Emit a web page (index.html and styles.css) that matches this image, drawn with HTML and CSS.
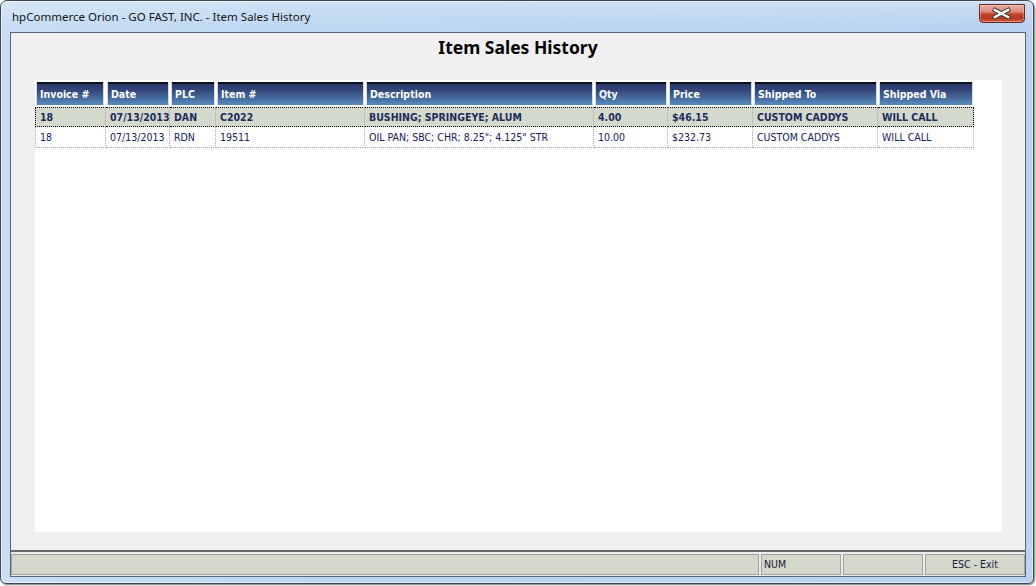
FILE: index.html
```html
<!DOCTYPE html>
<html>
<head>
<meta charset="utf-8">
<title>Item Sales History</title>
<link rel="stylesheet" href="styles.css">
</head>
<body>
<div class="window">
  <div class="titlebar">
    <span class="title">hpCommerce Orion - GO FAST, INC. - Item Sales History</span>
    <div class="close">
      <svg width="46" height="19" viewBox="0 0 46 19">
        <path d="M16 6 L29 13 M29 6 L16 13" stroke="#3b3b3b" stroke-width="4.4" stroke-linecap="square" fill="none"/>
        <path d="M16 6 L29 13 M29 6 L16 13" stroke="#ffffff" stroke-width="2.5" stroke-linecap="square" fill="none"/>
      </svg>
    </div>
  </div>
  <div class="client">
    <h1 class="heading">Item Sales History</h1>
    <div class="gridpanel">
      <table class="grid">
        <colgroup>
          <col class="w-inv"><col class="w-date"><col class="w-plc"><col class="w-item"><col class="w-desc"><col class="w-qty"><col class="w-price"><col class="w-to"><col class="w-via">
        </colgroup>
        <thead>
          <tr>
            <th><div class="hcell">Invoice #</div></th>
            <th><div class="hcell">Date</div></th>
            <th><div class="hcell">PLC</div></th>
            <th><div class="hcell">Item #</div></th>
            <th><div class="hcell">Description</div></th>
            <th><div class="hcell">Qty</div></th>
            <th><div class="hcell">Price</div></th>
            <th><div class="hcell">Shipped To</div></th>
            <th><div class="hcell">Shipped Via</div></th>
          </tr>
        </thead>
        <tbody>
          <tr class="selected">
            <td>18</td><td>07/13/2013</td><td>DAN</td><td>C2022</td><td>BUSHING; SPRINGEYE; ALUM</td><td>4.00</td><td>$46.15</td><td>CUSTOM CADDYS</td><td>WILL CALL</td>
          </tr>
          <tr>
            <td>18</td><td>07/13/2013</td><td>RDN</td><td>19511</td><td>OIL PAN; SBC; CHR; 8.25"; 4.125" STR</td><td>10.00</td><td>$232.73</td><td>CUSTOM CADDYS</td><td>WILL CALL</td>
          </tr>
        </tbody>
      </table>
    </div>
    <div class="statusbar">
      <div class="panel panel-main"></div>
      <div class="panel panel-num">NUM</div>
      <div class="panel panel-empty"></div>
      <div class="panel panel-esc">ESC - Exit</div>
    </div>
  </div>
</div>
</body>
</html>
```

FILE: styles.css
```css
html, body {
  margin: 0;
  padding: 0;
  background: #ffffff;
}

body {
  width: 1036px;
  height: 586px;
  overflow: hidden;
}

.window {
  box-sizing: border-box;
  width: 1034px;
  height: 584px;
  border: 1px solid #3f4650;
  border-radius: 7px 7px 6px 6px;
  background: linear-gradient(to right, #c9def4 0%, #bed7f1 30%, #b9d3f0 100%);
  box-shadow: inset 0 0 0 1px rgba(255,255,255,0.55), 1px 1px 2px rgba(0,0,0,0.55);
  padding: 0 7px 6px 9px;
  display: flex;
  flex-direction: column;
}

.titlebar {
  height: 31px;
  display: flex;
  align-items: flex-start;
  margin-left: -9px;
  margin-right: -7px;
  padding-left: 11px;
  background: linear-gradient(to bottom, rgba(255,255,255,0.25), rgba(255,255,255,0) 80%);
  border-radius: 6px 6px 0 0;
}

.title {
  font-family: "Noto Sans", "Open Sans", sans-serif;
  font-size: 11.5px;
  line-height: 16px;
  padding-top: 8px;
  color: #141414;
  white-space: nowrap;
}

.close {
  margin-left: auto;
  margin-top: 3px;
  margin-right: 8px;
  width: 46px;
  height: 19px;
  box-sizing: border-box;
  border: 1px solid #6b2a22;
  border-radius: 0 0 4px 4px;
  background: linear-gradient(to bottom, #eab0a3 0%, #dc8a78 40%, #c4462d 52%, #b8361e 78%, #d3654a 100%);
  box-shadow: inset 0 0 0 1px rgba(255,220,210,0.35);
  overflow: hidden;
}

.close svg {
  display: block;
  margin: -1px 0 0 -1px;
}

.client {
  flex: 1;
  border: 1px solid #56657a;
  background: #f0f0f0;
  display: flex;
  flex-direction: column;
}

.heading {
  margin: 0;
  height: 47px;
  box-sizing: border-box;
  padding-top: 4px;
  text-align: center;
  font-family: "Noto Sans", "Open Sans", sans-serif;
  font-weight: bold;
  font-size: 17.5px;
  line-height: 20px;
  color: #000000;
}

.gridpanel {
  margin: 0 23px 0 24px;
  height: 452px;
  background: #ffffff;
}

.grid {
  table-layout: fixed;
  border-collapse: separate;
  border-spacing: 0;
  width: 939px;
  font-family: "DejaVu Sans Condensed", "DejaVu Sans", sans-serif;
  font-size: 10.5px;
}

.w-inv { width: 71px; }
.w-date { width: 64px; }
.w-plc { width: 46px; }
.w-item { width: 149px; }
.w-desc { width: 229px; }
.w-qty { width: 74px; }
.w-price { width: 85px; }
.w-to { width: 125px; }
.w-via { width: 96px; }

.grid th {
  padding: 2px 2px 2px 2px;
  text-align: left;
}

.grid th:first-child {
  padding-right: 3px;
}

.hcell {
  height: 21px;
  border-top: 2px solid #0c0f1c;
  background: linear-gradient(to bottom, #2b386a 0%, #33467a 30%, #4a73a6 75%, #5a8dbf 100%);
  box-shadow: -1px 0 0 #d9d9d9, 1px 0 0 #d9d9d9;
  color: #ffffff;
  font-weight: bold;
  line-height: 20px;
  padding-left: 3px;
  white-space: nowrap;
  overflow: hidden;
}

.grid td {
  padding: 1px 4px 0 4px;
  line-height: 19px;
  color: #15205a;
  border-right: 1px dotted #a8a8a8;
  border-bottom: 1px dotted #a8a8a8;
  white-space: nowrap;
  overflow: hidden;
}

.grid td:first-child {
  border-left: 1px dotted #a8a8a8;
}

.grid tr.selected td {
  background: #d3d9cb;
  font-weight: bold;
  color: #1e2c5c;
  line-height: 17px;
  border-top: 1px dotted #000000;
  border-bottom: 1px dotted #000000;
}

.grid tr.selected td:first-child {
  border-left: 1px dotted #000000;
}

.grid tr.selected td:last-child {
  border-right: 1px dotted #000000;
}

.statusbar {
  margin-top: 18px;
  border-top: 2px solid #696969;
  flex: 1;
  display: flex;
  gap: 2px;
  padding-top: 2px;
  padding-bottom: 1px;
  background: #ececec;
  font-family: "DejaVu Sans Condensed", "DejaVu Sans", sans-serif;
  font-size: 10.5px;
  color: #1a1a3a;
}

.panel {
  box-sizing: border-box;
  border: 1px solid #a3a3a3;
  background: #d3d8ca;
  line-height: 19px;
  white-space: nowrap;
}

.panel-main { flex: 1; }
.panel-num { width: 80px; padding-left: 2px; }
.panel-empty { width: 80px; }
.panel-esc { width: 100px; text-align: center; }
```
